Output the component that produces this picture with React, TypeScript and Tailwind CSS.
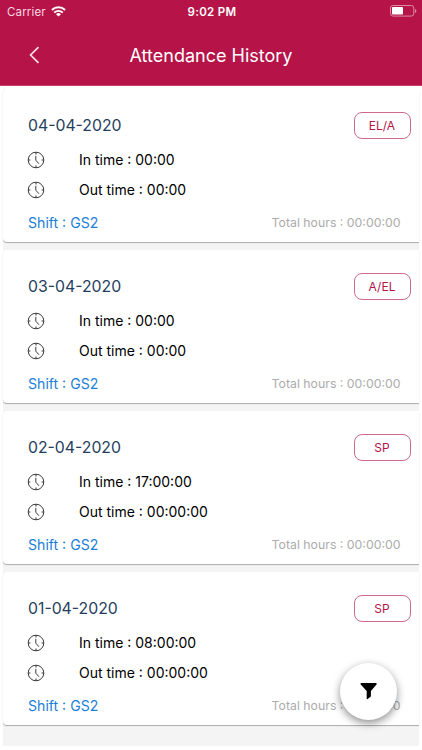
import { useState } from "react"

type Attendance = {
    date: string
    status: string
    inTime: string
    outTime: string
    shift: string
    total: string
}

const records: Attendance[] = [
    { date: "04-04-2020", status: "EL/A", inTime: "00:00", outTime: "00:00", shift: "GS2", total: "00:00:00" },
    { date: "03-04-2020", status: "A/EL", inTime: "00:00", outTime: "00:00", shift: "GS2", total: "00:00:00" },
    { date: "02-04-2020", status: "SP", inTime: "17:00:00", outTime: "00:00:00", shift: "GS2", total: "00:00:00" },
    { date: "01-04-2020", status: "SP", inTime: "08:00:00", outTime: "00:00:00", shift: "GS2", total: "00:00:00" },
]

function ClockIcon() {
    return (
        <svg className="w-[18px] h-[18px] shrink-0" viewBox="0 0 18 18" fill="none" stroke="#3c3c3c">
            <circle cx="9" cy="9" r="7.8" strokeWidth="1" />
            <path d="M9 1.2v2.2M9 14.6v2.2M1.2 9h2.2M14.6 9h2.2" strokeWidth="1.1" />
            <path d="M8.8 4.8v4.4l3.2 3.6" strokeWidth="1" />
        </svg>
    )
}

function StatusBar() {
    return (
        <div className="h-[22px] grid grid-cols-3 items-center pl-[7px] pr-[5px]">
            <div className="flex items-center gap-[5px]">
                <span className="pt-[2px] text-[11.5px] leading-[16px] tracking-[0.15px] text-[#f7d7e1]">Carrier</span>
                <svg className="w-[15px] h-[11px]" viewBox="0 0 15 11" fill="none" stroke="#ffffff" strokeWidth="1.9">
                    <path d="M0.9 4a9.4 9.4 0 0 1 13.2 0" />
                    <path d="M3.2 6.6a6.1 6.1 0 0 1 8.6 0" />
                    <path d="M7.5 10.6L5 8.2a3.6 3.6 0 0 1 5 0z" fill="#ffffff" stroke="none" />
                </svg>
            </div>
            <span className="pt-[2px] text-center text-[11.5px] leading-[16px] font-semibold tracking-[0.3px]">9:02 PM</span>
            <svg className="w-[27px] h-[12px] justify-self-end" viewBox="0 0 27 12" fill="none">
                <rect x="0.5" y="0.5" width="23.3" height="10.6" rx="2.6" stroke="#dc8aa5" />
                <rect x="2" y="2" width="11" height="7.6" rx="0.8" fill="#ffffff" />
                <path d="M25 4v4q1.4-.6 1.4-2T25 4z" fill="#dc8aa5" />
            </svg>
        </div>
    )
}

function AttendanceCard({ item }: { item: Attendance }) {
    return (
        <li className="h-[153px] bg-white rounded-l-[4px] shadow-[0_1px_1px_rgba(0,0,0,0.3)] pl-[25px] pr-[8.5px] pt-[23px]">
            <div className="h-[27px] flex items-center justify-between">
                <h2 className="text-[15.8px] text-[#263e5e]">{item.date}</h2>
                <span className="w-[57px] h-[27px] flex items-center justify-center rounded-[8px] border border-[#cf6a8c] text-[12px] text-[#b3144a]">{item.status}</span>
            </div>
            <div className="mt-[6px] -ml-px text-[14px] leading-[20px] text-black">
                <div className="h-[29px] flex items-center gap-[34px]">
                    <ClockIcon />
                    <span>In time : {item.inTime}</span>
                </div>
                <div className="mt-px h-[30px] flex items-center gap-[34px]">
                    <ClockIcon />
                    <span>Out time : {item.outTime}</span>
                </div>
            </div>
            <div className="mt-[8px] h-[20px] pr-[10px] flex items-center justify-between">
                <span className="text-[14.1px] text-[#1c80d8]">Shift : {item.shift}</span>
                <span className="text-[12.3px] text-[#acacac]">Total hours : {item.total}</span>
            </div>
        </li>
    )
}

export default function App() {
    const [items] = useState(records)

    return (
        <div className="w-[422px] h-[750px] overflow-hidden relative bg-white font-['Inter',sans-serif]">
            <header className="h-[86px] bg-[#b61449] border-b border-[#c23f6a] text-white">
                <StatusBar />
                <div className="h-[66px] grid grid-cols-[80px_1fr_80px] items-center">
                    <button className="pl-[29px] cursor-pointer" aria-label="Back">
                        <svg className="w-[11px] h-[18px]" viewBox="0 0 11 18" fill="none" stroke="#f9dfe7" strokeWidth="1.7">
                            <path d="M9.5 1.2L1.6 9l7.9 7.8" />
                        </svg>
                    </button>
                    <h1 className="text-center text-[18px]">Attendance History</h1>
                </div>
            </header>

            <ul className="mx-[3px] mt-[3px] h-[657px] bg-[#f4f4f4] flex flex-col gap-[8px]">
                {items.map((item) => (
                    <AttendanceCard key={item.date} item={item} />
                ))}
            </ul>

            <button
                className="absolute left-[340px] top-[663px] w-[57px] h-[57px] rounded-full bg-white flex items-center justify-center cursor-pointer shadow-[0_3px_8px_rgba(0,0,0,0.45)]"
                aria-label="Filter"
            >
                <svg className="w-[17px] h-[17px]" viewBox="0 0 17 17" fill="#000000">
                    <path d="M.9 0h15.4q.7.7.2 1.5L10.9 8v5.6L7.3 16.3q-.6.2-.6-.5V8L.7 1.5Q.2.7.9 0z" />
                </svg>
            </button>
        </div>
    )
}
